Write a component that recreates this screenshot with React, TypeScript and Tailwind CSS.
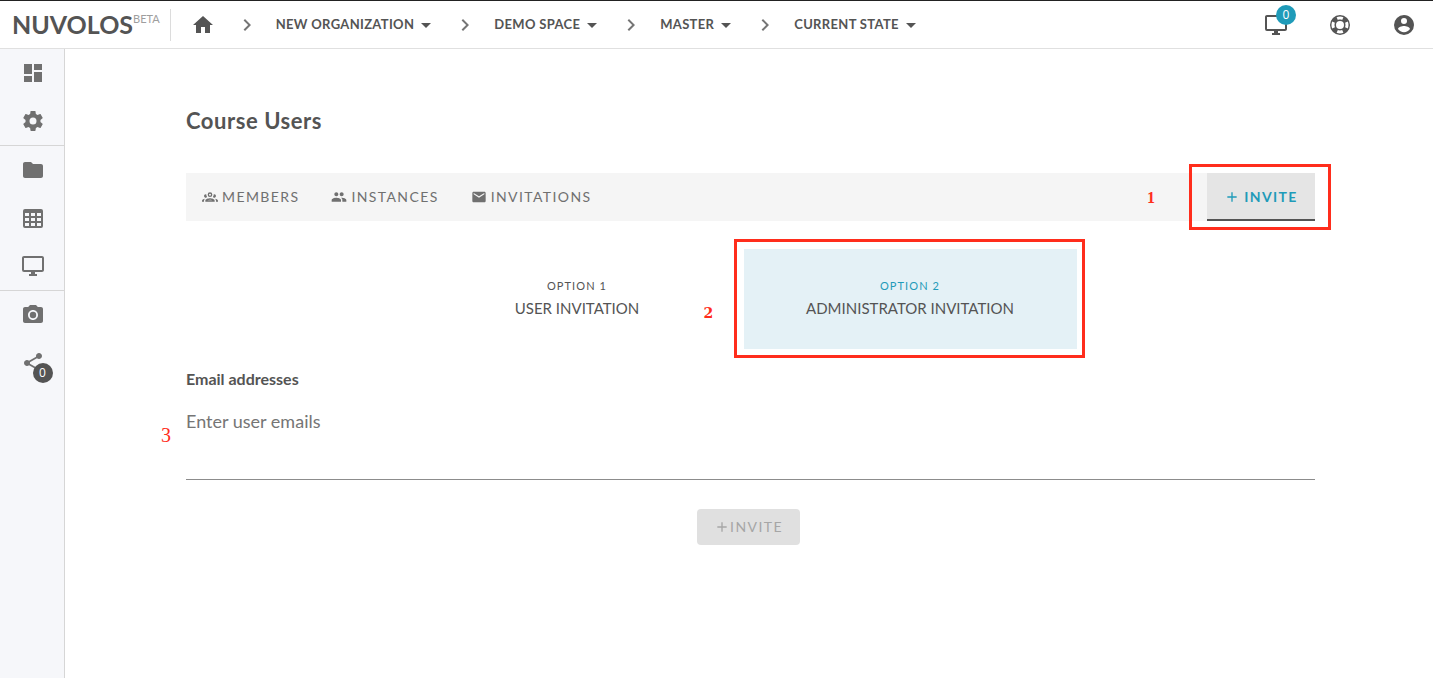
import type { ReactNode } from "react";
import {
  MdAdd,
  MdArrowDropDown,
  MdCameraAlt,
  MdChevronRight,
  MdDashboard,
  MdEmail,
  MdFolder,
  MdHome,
  MdPeople,
  MdShare,
} from "react-icons/md";

const paths = {
  monitor:
    "M21,16H3V4H21M21,2H3C1.89,2 1,2.89 1,4V16A2,2 0 0,0 3,18H10V20H8V22H16V20H14V18H21C22.11,18 23,17.11 23,16V4C23,2.89 22.1,2 21,2Z",
  lifebuoy:
    "M19.79,15.41C20.74,13.24 20.74,10.75 19.79,8.59L17.05,9.83C17.65,11.21 17.65,12.78 17.06,14.17L19.79,15.41M15.42,4.21C13.25,3.26 10.76,3.26 8.59,4.21L9.83,6.94C11.22,6.35 12.79,6.35 14.18,6.95L15.42,4.21M4.21,8.58C3.26,10.76 3.26,13.24 4.21,15.42L6.95,14.17C6.35,12.79 6.35,11.21 6.95,9.82L4.21,8.58M8.59,19.79C10.76,20.74 13.25,20.74 15.42,19.78L14.18,17.05C12.8,17.65 11.22,17.65 9.84,17.06L8.59,19.79M12,2A10,10 0 0,1 22,12A10,10 0 0,1 12,22A10,10 0 0,1 2,12A10,10 0 0,1 12,2M12,8A4,4 0 0,0 8,12A4,4 0 0,0 12,16A4,4 0 0,0 16,12A4,4 0 0,0 12,8Z",
  account:
    "M12,19.2C9.5,19.2 7.29,17.92 6,16C6.03,14 10,12.9 12,12.9C14,12.9 17.97,14 18,16C16.71,17.92 14.5,19.2 12,19.2M12,5A3,3 0 0,1 15,8A3,3 0 0,1 12,11A3,3 0 0,1 9,8A3,3 0 0,1 12,5M12,2A10,10 0 0,0 2,12A10,10 0 0,0 12,22A10,10 0 0,0 22,12C22,6.47 17.5,2 12,2Z",
  cog: "M12,15.5A3.5,3.5 0 0,1 8.5,12A3.5,3.5 0 0,1 12,8.5A3.5,3.5 0 0,1 15.5,12A3.5,3.5 0 0,1 12,15.5M19.43,12.97C19.47,12.65 19.5,12.33 19.5,12C19.5,11.67 19.47,11.34 19.43,11L21.54,9.37C21.73,9.22 21.78,8.95 21.66,8.73L19.66,5.27C19.54,5.05 19.27,4.96 19.05,5.05L16.56,6.05C16.04,5.66 15.5,5.32 14.87,5.07L14.5,2.42C14.46,2.18 14.25,2 14,2H10C9.75,2 9.54,2.18 9.5,2.42L9.13,5.07C8.5,5.32 7.96,5.66 7.44,6.05L4.95,5.05C4.73,4.96 4.46,5.05 4.34,5.27L2.34,8.73C2.21,8.95 2.27,9.22 2.46,9.37L4.57,11C4.53,11.34 4.5,11.67 4.5,12C4.5,12.33 4.53,12.65 4.57,12.97L2.46,14.63C2.27,14.78 2.21,15.05 2.34,15.27L4.34,18.73C4.46,18.95 4.73,19.03 4.95,18.95L7.44,17.94C7.96,18.34 8.5,18.68 9.13,18.93L9.5,21.58C9.54,21.82 9.75,22 10,22H14C14.25,22 14.46,21.82 14.5,21.58L14.87,18.93C15.5,18.67 16.04,18.34 16.56,17.94L19.05,18.95C19.27,19.03 19.54,18.95 19.66,18.73L21.66,15.27C21.78,15.05 21.73,14.78 21.54,14.63L19.43,12.97Z",
  table:
    "M4,3H20A2,2 0 0,1 22,5V20A2,2 0 0,1 20,22H4A2,2 0 0,1 2,20V5A2,2 0 0,1 4,3M4,7V10H8V7H4M10,7V10H14V7H10M20,10V7H16V10H20M4,12V15H8V12H4M4,20H8V17H4V20M10,12V15H14V12H10M10,20H14V17H10V20M20,20V17H16V20H20M20,12H16V15H20V12Z",
  group:
    "M12,5A3.5,3.5 0 0,0 8.5,8.5A3.5,3.5 0 0,0 12,12A3.5,3.5 0 0,0 15.5,8.5A3.5,3.5 0 0,0 12,5M12,7A1.5,1.5 0 0,1 13.5,8.5A1.5,1.5 0 0,1 12,10A1.5,1.5 0 0,1 10.5,8.5A1.5,1.5 0 0,1 12,7M5.5,8A2.5,2.5 0 0,0 3,10.5C3,11.44 3.53,12.25 4.29,12.68C4.65,12.88 5.06,13 5.5,13C5.94,13 6.35,12.88 6.71,12.68C7.08,12.47 7.39,12.17 7.62,11.81C6.89,10.86 6.5,9.7 6.5,8.5C6.5,8.41 6.5,8.31 6.5,8.22C6.2,8.08 5.86,8 5.5,8M18.5,8C18.14,8 17.8,8.08 17.5,8.22C17.5,8.31 17.5,8.41 17.5,8.5C17.5,9.7 17.11,10.86 16.38,11.81C16.5,12 16.63,12.15 16.78,12.3C16.94,12.45 17.1,12.58 17.29,12.68C17.65,12.88 18.06,13 18.5,13C18.94,13 19.35,12.88 19.71,12.68C20.47,12.25 21,11.44 21,10.5A2.5,2.5 0 0,0 18.5,8M12,14C9.66,14 5,15.17 5,17.5V19H19V17.5C19,15.17 14.34,14 12,14M4.71,14.55C2.78,14.78 0,15.76 0,17.5V19H3V17.07C3,16.06 3.69,15.22 4.71,14.55M19.29,14.55C20.31,15.22 21,16.06 21,17.07V19H24V17.5C24,15.76 21.22,14.78 19.29,14.55M12,16C13.53,16 15.24,16.5 16.23,17H7.77C8.76,16.5 10.47,16 12,16Z",
};

function Glyph({ name, size = "size-6" }: { name: keyof typeof paths; size?: string }) {
  return (
    <svg viewBox="0 0 24 24" className={`${size} fill-current`} aria-hidden="true">
      <path d={paths[name]} />
    </svg>
  );
}

function SideItem({ label, children }: { label: string; children: ReactNode }) {
  return (
    <a href="#" aria-label={label} className="flex h-12 items-center justify-center pl-px">
      <span className="relative">{children}</span>
    </a>
  );
}

function Crumb({ label }: { label: string }) {
  return (
    <>
      <MdChevronRight className="size-6 text-[#757575]" aria-hidden="true" />
      <button className="ml-[17px] mr-[15px] flex items-center text-[13px] font-bold tracking-wide">
        {label}
        <MdArrowDropDown className="size-6" aria-hidden="true" />
      </button>
    </>
  );
}

function Tab({ label, icon }: { label: string; icon: ReactNode }) {
  return (
    <button className="flex h-12 items-center gap-1 px-4 text-sm tracking-widest text-[#707070]">
      {icon}
      {label}
    </button>
  );
}

export default function App() {
  return (
    <div className="flex min-h-screen flex-col bg-white font-['Lato',sans-serif] text-[#545454]">
      <header className="flex h-[49px] items-center border-t border-b border-t-[#222] border-b-[#e0e0e0]">
        <a href="#" className="flex h-8 items-center border-r border-[#dcdcdc] pr-2.5 pl-3">
          <span className="text-[25px] font-bold">NUVOLOS</span>
          <span className="self-start text-[11px] leading-5 text-[#9e9e9e]">BETA</span>
        </a>
        <a href="#" aria-label="Home" className="mx-5">
          <MdHome className="size-6" />
        </a>
        <nav aria-label="Breadcrumb" className="flex items-center">
          <Crumb label="NEW ORGANIZATION" />
          <Crumb label="DEMO SPACE" />
          <Crumb label="MASTER" />
          <Crumb label="CURRENT STATE" />
        </nav>
        <div className="ml-auto flex items-center gap-10 pr-[17px]">
          <button aria-label="Running applications" className="relative">
            <Glyph name="monitor" />
            <span className="absolute -top-2 left-3 flex size-5 items-center justify-center rounded-full bg-[#1f9bb9] font-['Open_Sans',sans-serif] text-xs text-white">
              0
            </span>
          </button>
          <button aria-label="Help">
            <Glyph name="lifebuoy" />
          </button>
          <button aria-label="Account">
            <Glyph name="account" />
          </button>
        </div>
      </header>

      <div className="flex flex-1">
        <aside className="w-[65px] shrink-0 border-r border-[#d6d6d6] bg-[#f6f7fa] text-[#707070]">
          <nav aria-label="Space" className="divide-y divide-[#d6d6d6]">
            <div>
              <SideItem label="Dashboard">
                <MdDashboard className="size-6" />
              </SideItem>
              <SideItem label="Settings">
                <Glyph name="cog" />
              </SideItem>
            </div>
            <div>
              <SideItem label="Files">
                <MdFolder className="size-6" />
              </SideItem>
              <SideItem label="Tables">
                <Glyph name="table" />
              </SideItem>
              <SideItem label="Applications">
                <Glyph name="monitor" />
              </SideItem>
            </div>
            <div>
              <SideItem label="Snapshots">
                <MdCameraAlt className="size-6" />
              </SideItem>
              <SideItem label="Shares">
                <MdShare className="size-6" />
                <span className="absolute top-3 left-3 flex size-5 items-center justify-center rounded-full bg-[#545454] font-['Open_Sans',sans-serif] text-xs text-white">
                  0
                </span>
              </SideItem>
            </div>
          </nav>
        </aside>

        <main className="flex-1 pt-14 pr-[118px] pl-[121px]">
          <h1 className="text-[22px] leading-8 font-bold tracking-wide">Course Users</h1>

          <div className="mt-9 flex h-12 items-center bg-[#f5f5f5]">
            <Tab label="MEMBERS" icon={<Glyph name="group" size="size-4" />} />
            <Tab label="INSTANCES" icon={<MdPeople className="size-4" />} />
            <Tab label="INVITATIONS" icon={<MdEmail className="size-4" />} />
            <div className="relative ml-auto">
              <span className="absolute top-[13px] -left-[60px] font-['Liberation_Serif',serif] text-base font-bold text-[#ff2d1c]">
                1
              </span>
              <span className="pointer-events-none absolute -inset-y-[9px] -right-4 -left-[18px] border-3 border-[#ff2d1c]" />
              <button className="flex h-12 w-[108px] items-center justify-center gap-1 border-b-2 border-[#545454] bg-[#e5e5e5] pt-0.5 text-sm font-bold tracking-widest text-[#1f9bb9]">
                <MdAdd className="size-4" aria-hidden="true" />
                INVITE
              </button>
            </div>
          </div>

          <div className="mt-7 flex justify-center pr-[14px]">
            <button className="flex h-[100px] w-[333px] flex-col items-center justify-center gap-0.5">
              <span className="text-[11px] leading-4 tracking-widest">OPTION 1</span>
              <span className="text-[15px] leading-6">USER INVITATION</span>
            </button>
            <div className="relative">
              <span className="absolute top-[54px] -left-10 font-['DejaVu_Serif',serif] text-sm leading-5 font-bold text-[#ff2d1c]">
                2
              </span>
              <span className="pointer-events-none absolute -top-[10px] -right-2 -bottom-[9px] -left-[10px] border-3 border-[#ff2d1c]" />
              <button className="flex h-[100px] w-[333px] flex-col items-center justify-center gap-0.5 bg-[#e4f1f6]">
                <span className="text-[11px] leading-4 tracking-widest text-[#1f9bb9]">OPTION 2</span>
                <span className="text-[15px] leading-6">ADMINISTRATOR INVITATION</span>
              </button>
            </div>
          </div>

          <form>
            <label htmlFor="emails" className="mt-[18px] block text-base leading-6 font-bold">
              Email addresses
            </label>
            <div className="relative mt-4">
              <span className="absolute top-3.5 -left-[25px] font-['Liberation_Serif',serif] text-xl text-[#ff2d1c]">
                3
              </span>
              <textarea
                id="emails"
                placeholder="Enter user emails"
                className="block h-[73px] w-full resize-none border-b border-[#8c8c8c] text-lg leading-7 outline-none placeholder:text-[#757575]"
              />
            </div>
            <div className="mt-[29px] flex justify-center pr-1">
              <button
                type="button"
                disabled
                className="flex h-9 w-[103px] items-center justify-center rounded-sm bg-[#e0e0e0] text-sm tracking-widest text-[#a6a6a6]"
              >
                <MdAdd className="size-4" aria-hidden="true" />
                INVITE
              </button>
            </div>
          </form>
        </main>
      </div>
    </div>
  );
}
